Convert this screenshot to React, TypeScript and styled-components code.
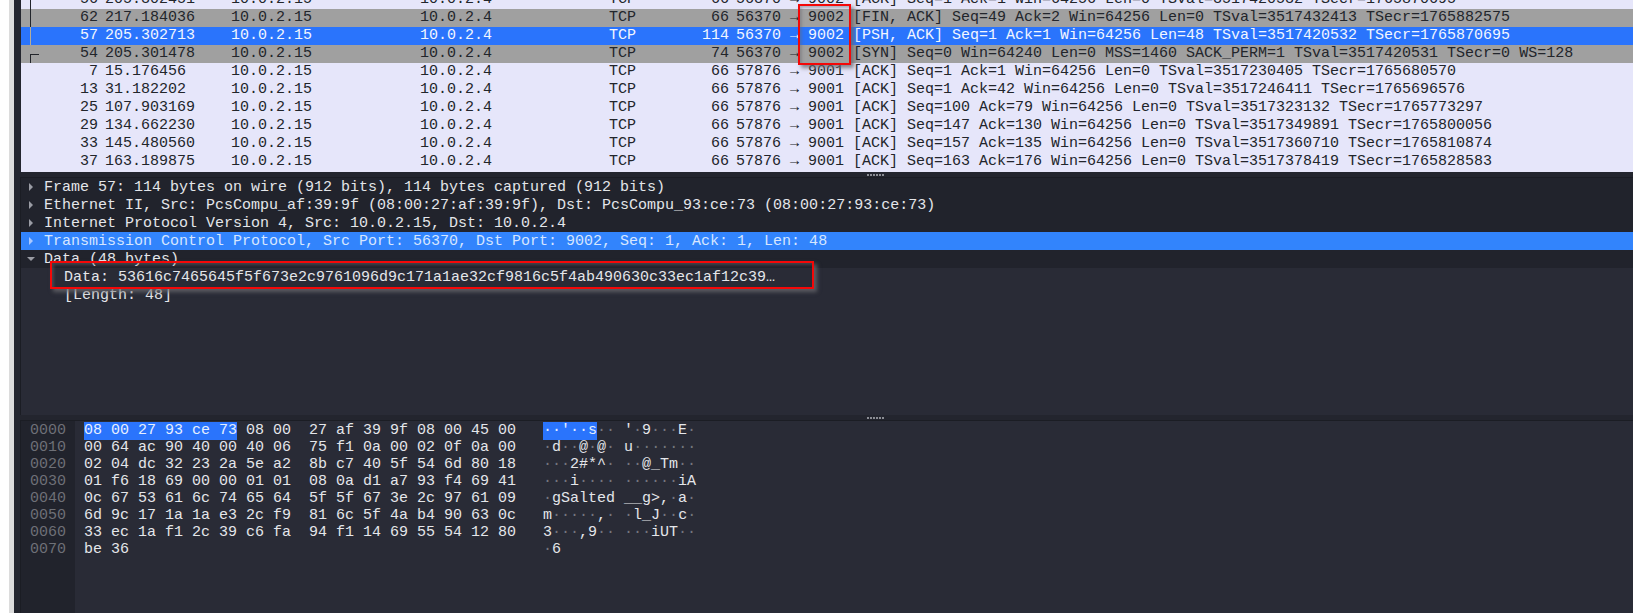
import React from "react";
import styled, { createGlobalStyle } from "styled-components";

const MONO = `"Liberation Mono", monospace`;

const GlobalStyle = createGlobalStyle`
  html, body {
    margin: 0;
    padding: 0;
    background: #ffffff;
  }
`;

const Screen = styled.div`
  position: relative;
  width: 1633px;
  height: 613px;
  overflow: hidden;
  display: flex;
  font-family: ${MONO};
  font-size: 15px;
  color: #e4e6ea;
`;

const WhiteEdge = styled.div`
  width: 9px;
  flex-shrink: 0;
  background: #ffffff;
`;

const GreyEdge = styled.div`
  width: 5px;
  flex-shrink: 0;
  background: #dcdcdc;
`;

const DarkEdge = styled.div`
  width: 7px;
  flex-shrink: 0;
  background: #23252e;
`;

const Panes = styled.div`
  flex: 1;
  display: flex;
  flex-direction: column;
  min-width: 0;
`;

const PacketList = styled.div`
  height: 172px;
  flex-shrink: 0;
  box-sizing: border-box;
  padding-bottom: 1px;
  display: flex;
  flex-direction: column;
  justify-content: flex-end;
  overflow: hidden;
  background: #e6e6fa;
`;

const PacketRow = styled.div<{ $kind: string }>`
  height: 18px;
  line-height: 18px;
  flex-shrink: 0;
  display: grid;
  grid-template-columns: 77px 133px 189px 189px 60px 60px 1fr;
  white-space: pre;
  color: ${(p) => (p.$kind === "sel" ? "#f2f6ff" : "#22252b")};
  background: ${(p) =>
    p.$kind === "sel" ? "#2a74fc" : p.$kind === "grey" ? "#a0a0a0" : "#e6e6fa"};
`;

const NoCell = styled.span`
  position: relative;
  text-align: right;
`;

const TimeCell = styled.span`
  padding-left: 7px;
`;

const LengthCell = styled.span`
  text-align: right;
`;

const InfoCell = styled.span`
  padding-left: 7px;
`;

const ConvLine = styled.i<{ $kind: string; $end?: boolean }>`
  position: absolute;
  left: 9px;
  top: ${(p) => (p.$end ? "9px" : "0")};
  bottom: 0;
  width: ${(p) => (p.$end ? "8px" : "0")};
  border-left: 1px solid ${(p) => (p.$kind === "sel" ? "#b5ac98" : "#22252b")};
  border-top: ${(p) => (p.$end ? "1px solid #22252b" : "0")};
`;

const Splitter = styled.div`
  height: 5px;
  flex-shrink: 0;
  background: #23252e;
  display: flex;
  align-items: center;
  padding-left: 846px;
`;

const Grip = styled.span`
  width: 17px;
  height: 2px;
  background-image: linear-gradient(to right, #8b8d94 2px, transparent 2px);
  background-size: 3px 2px;
`;

const Details = styled.div`
  height: 238px;
  flex-shrink: 0;
  background: #292b36;
  display: flex;
  flex-direction: column;
  border-top: 1px solid #1b1d24;
  box-shadow: -1px 0 0 #1b1d24;
  box-sizing: border-box;
`;

const TreeRow = styled.div<{ $sel?: boolean; $child?: boolean }>`
  height: 18px;
  line-height: 18px;
  flex-shrink: 0;
  box-sizing: border-box;
  display: flex;
  align-items: center;
  white-space: pre;
  padding: 2px 0 0 ${(p) => (p.$child ? "43px" : "5px")};
  color: ${(p) => (p.$sel ? "#d6e6ff" : "#e4e6ea")};
  background: ${(p) =>
    p.$sel ? "#3284fc" : p.$child ? "#292b36" : "#21232c"};
`;

const Arrow = styled.span<{ $open?: boolean; $sel?: boolean }>`
  width: 18px;
  flex-shrink: 0;
  display: flex;
  margin-top: -2px;
  padding-left: ${(p) => (p.$open ? "1px" : "3px")};
  box-sizing: border-box;

  &::before {
    content: "";
    border-style: solid;
    border-color: transparent;
    ${(p) =>
      p.$open
        ? "border-width: 4px 4px 0 4px; border-top-color: #9a9ca4;"
        : `border-width: 4px 0 4px 4px; border-left-color: ${p.$sel ? "#a9c8ff" : "#9a9ca4"};`}
  }
`;

const HexPane = styled.div`
  flex: 1;
  display: grid;
  grid-template-columns: 54px 1fr;
  border-top: 1px solid #1b1d24;
  box-shadow: -1px 0 0 #1b1d24;
  background: #292b36;
  min-height: 0;
`;

const OffsetColumn = styled.div`
  background: #21232c;
  color: #6e7077;
  padding: 1px 0 0 9px;
  line-height: 17px;
`;

const HexColumn = styled.div`
  padding: 1px 0 0 9px;
  line-height: 17px;
`;

const HexLine = styled.div`
  height: 17px;
  display: flex;
  white-space: pre;
`;

const Bytes = styled.span`
  width: 459px;
  flex-shrink: 0;
`;

const Marked = styled.span`
  background: #2a74fc;
  color: #e6efff;
  display: inline-block;
  height: 18px;
`;

const Dim = styled.span`
  color: #74767e;
`;

const RedBox = styled.div<{ $x: number; $y: number; $w: number; $h: number }>`
  position: absolute;
  left: ${(p) => p.$x}px;
  top: ${(p) => p.$y}px;
  width: ${(p) => p.$w}px;
  height: ${(p) => p.$h}px;
  box-sizing: border-box;
  border: 2px solid #f40808;
  box-shadow: 3px 3px 4px rgba(105, 105, 110, 0.8),
    inset 2px 2px 3px rgba(105, 105, 110, 0.45);
`;

type Packet = {
  kind: string;
  no: string;
  time: string;
  len: string;
  info: string;
  conv?: string;
};

const packets: Packet[] = [
  { kind: "plain", no: "56", time: "205.302451", len: "66", info: "56370 → 9002 [ACK] Seq=1 Ack=1 Win=64256 Len=0 TSval=3517420532 TSecr=1765870695", conv: "line" },
  { kind: "grey", no: "62", time: "217.184036", len: "66", info: "56370 → 9002 [FIN, ACK] Seq=49 Ack=2 Win=64256 Len=0 TSval=3517432413 TSecr=1765882575", conv: "line" },
  { kind: "sel", no: "57", time: "205.302713", len: "114", info: "56370 → 9002 [PSH, ACK] Seq=1 Ack=1 Win=64256 Len=48 TSval=3517420532 TSecr=1765870695", conv: "line" },
  { kind: "grey", no: "54", time: "205.301478", len: "74", info: "56370 → 9002 [SYN] Seq=0 Win=64240 Len=0 MSS=1460 SACK_PERM=1 TSval=3517420531 TSecr=0 WS=128", conv: "end" },
  { kind: "plain", no: "7", time: "15.176456", len: "66", info: "57876 → 9001 [ACK] Seq=1 Ack=1 Win=64256 Len=0 TSval=3517230405 TSecr=1765680570" },
  { kind: "plain", no: "13", time: "31.182202", len: "66", info: "57876 → 9001 [ACK] Seq=1 Ack=42 Win=64256 Len=0 TSval=3517246411 TSecr=1765696576" },
  { kind: "plain", no: "25", time: "107.903169", len: "66", info: "57876 → 9001 [ACK] Seq=100 Ack=79 Win=64256 Len=0 TSval=3517323132 TSecr=1765773297" },
  { kind: "plain", no: "29", time: "134.662230", len: "66", info: "57876 → 9001 [ACK] Seq=147 Ack=130 Win=64256 Len=0 TSval=3517349891 TSecr=1765800056" },
  { kind: "plain", no: "33", time: "145.480560", len: "66", info: "57876 → 9001 [ACK] Seq=157 Ack=135 Win=64256 Len=0 TSval=3517360710 TSecr=1765810874" },
  { kind: "plain", no: "37", time: "163.189875", len: "66", info: "57876 → 9001 [ACK] Seq=163 Ack=176 Win=64256 Len=0 TSval=3517378419 TSecr=1765828583" },
];

const offsets = ["0000", "0010", "0020", "0030", "0040", "0050", "0060", "0070"];

const hexRows = [
  "08 00 27 93 ce 73 08 00  27 af 39 9f 08 00 45 00",
  "00 64 ac 90 40 00 40 06  75 f1 0a 00 02 0f 0a 00",
  "02 04 dc 32 23 2a 5e a2  8b c7 40 5f 54 6d 80 18",
  "01 f6 18 69 00 00 01 01  08 0a d1 a7 93 f4 69 41",
  "0c 67 53 61 6c 74 65 64  5f 5f 67 3e 2c 97 61 09",
  "6d 9c 17 1a 1a e3 2c f9  81 6c 5f 4a b4 90 63 0c",
  "33 ec 1a f1 2c 39 c6 fa  94 f1 14 69 55 54 12 80",
  "be 36",
];

// unprintable bytes show as a dim dot, so split each ascii line in runs
const asciiRows = [
  "··'··s·· '·9···E·",
  "·d··@·@· u·······",
  "···2#*^· ··@_Tm··",
  "···i···· ······iA",
  "·gSalted __g>,·a·",
  "m·····,· ·l_J··c·",
  "3···,9·· ···iUT··",
  "·6",
];

const AsciiText = ({ text }: { text: string }) => (
  <>
    {text.split(/(·+)/).map((run, i) =>
      run.startsWith("·") ? <Dim key={i}>{run}</Dim> : <span key={i}>{run}</span>
    )}
  </>
);

const App: React.FC = () => {
  return (
    <Screen>
      <GlobalStyle />
      <WhiteEdge />
      <GreyEdge />
      <DarkEdge />
      <Panes>
        <PacketList>
          {packets.map((p) => (
            <PacketRow key={p.no} $kind={p.kind}>
              <NoCell>
                {p.conv && <ConvLine $kind={p.kind} $end={p.conv === "end"} />}
                {p.no}
              </NoCell>
              <TimeCell>{p.time}</TimeCell>
              <span>10.0.2.15</span>
              <span>10.0.2.4</span>
              <span>TCP</span>
              <LengthCell>{p.len}</LengthCell>
              <InfoCell>{p.info}</InfoCell>
            </PacketRow>
          ))}
        </PacketList>
        <Splitter>
          <Grip />
        </Splitter>
        <Details>
          <TreeRow>
            <Arrow />
            Frame 57: 114 bytes on wire (912 bits), 114 bytes captured (912 bits)
          </TreeRow>
          <TreeRow>
            <Arrow />
            Ethernet II, Src: PcsCompu_af:39:9f (08:00:27:af:39:9f), Dst: PcsCompu_93:ce:73 (08:00:27:93:ce:73)
          </TreeRow>
          <TreeRow>
            <Arrow />
            Internet Protocol Version 4, Src: 10.0.2.15, Dst: 10.0.2.4
          </TreeRow>
          <TreeRow $sel>
            <Arrow $sel />
            Transmission Control Protocol, Src Port: 56370, Dst Port: 9002, Seq: 1, Ack: 1, Len: 48
          </TreeRow>
          <TreeRow>
            <Arrow $open />
            Data (48 bytes)
          </TreeRow>
          <TreeRow $child>
            Data: 53616c7465645f5f673e2c9761096d9c171a1ae32cf9816c5f4ab490630c33ec1af12c39…
          </TreeRow>
          <TreeRow $child>[Length: 48]</TreeRow>
        </Details>
        <Splitter>
          <Grip />
        </Splitter>
        <HexPane>
          <OffsetColumn>
            {offsets.map((o) => (
              <div key={o}>{o}</div>
            ))}
          </OffsetColumn>
          <HexColumn>
            {hexRows.map((row, i) => (
              <HexLine key={row}>
                <Bytes>
                  {i === 0 ? (
                    <>
                      <Marked>08 00 27 93 ce 73</Marked>
                      {row.slice(17)}
                    </>
                  ) : (
                    row
                  )}
                </Bytes>
                {i === 0 ? (
                  <>
                    <Marked>··'··s</Marked>
                    <AsciiText text={asciiRows[0].slice(6)} />
                  </>
                ) : (
                  <AsciiText text={asciiRows[i]} />
                )}
              </HexLine>
            ))}
          </HexColumn>
        </HexPane>
      </Panes>
      <RedBox $x={798} $y={4} $w={53} $h={61} />
      <RedBox $x={50} $y={261} $w={764} $h={28} />
    </Screen>
  );
};

export default App;
